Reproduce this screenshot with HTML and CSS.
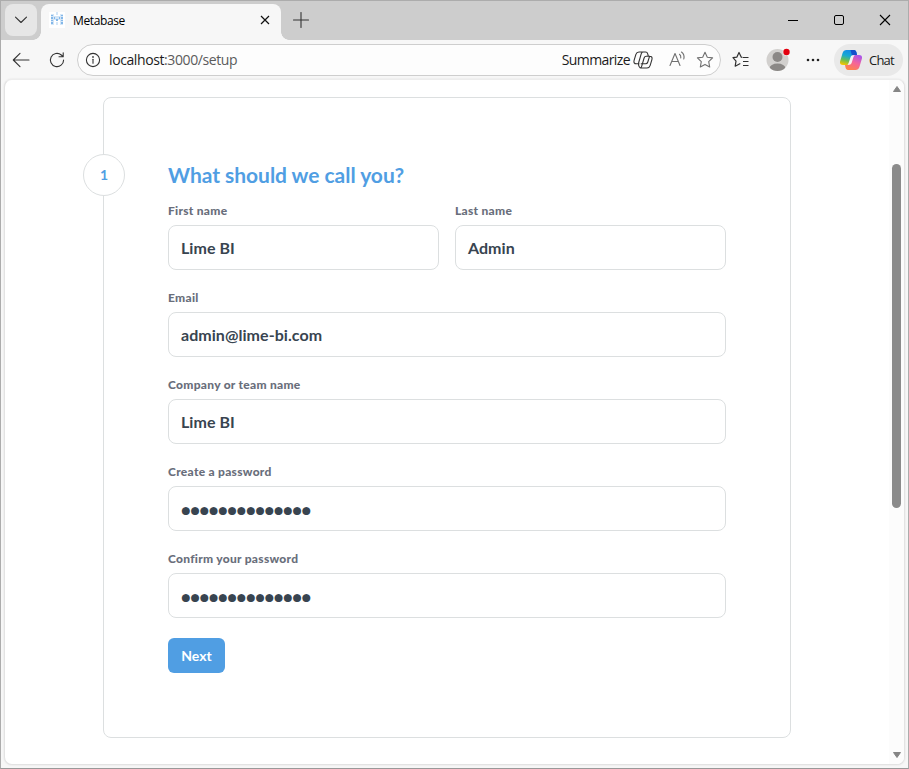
FILE: index.html
```html
<!DOCTYPE html>
<html lang="en">
<head>
<meta charset="utf-8">
<title>Metabase</title>
<link rel="stylesheet" href="styles.css">
</head>
<body>
<div class="window">
  <header class="tabstrip">
    <div class="tab-actions"><svg width="14" height="8" viewBox="0 0 14 8"><path d="M1.500 1.200 7 6.500l5.500-5.300" class="line"/></svg></div>
    <div class="tab">
      <svg class="favicon" width="16" height="16" viewBox="0 0 16 16"><rect width="16" height="16" fill="#fff"/>
        <g fill="#d4e6f7"><rect x="2" y="2" width="3" height="11"/><rect x="11" y="2" width="3" height="11"/><rect x="7" y="0" width="2" height="3"/><rect x="7" y="10" width="2" height="3"/><rect x="5" y="4" width="6" height="4"/></g>
        <g fill="#84b8e9"><rect x="2" y="3" width="2" height="1"/><rect x="2" y="5" width="2" height="2"/><rect x="2" y="8" width="2" height="1"/><rect x="2" y="10" width="2" height="2"/><rect x="12" y="3" width="2" height="1"/><rect x="12" y="5" width="2" height="2"/><rect x="12" y="8" width="2" height="1"/><rect x="12" y="10" width="2" height="2"/><rect x="5" y="5" width="1" height="2"/><rect x="10" y="5" width="1" height="2"/><rect x="7" y="7" width="2" height="2"/></g></svg>
      <span class="tab-title">Metabase</span>
      <svg class="tab-close" width="10" height="10" viewBox="0 0 10 10"><path d="m1 1 8 8M9 1 1 9" stroke="#111" stroke-width="1.200"/></svg>
    </div>
    <svg class="new-tab" width="16" height="16" viewBox="0 0 16 16"><path d="M8 .5v15M.5 8h15" class="line"/></svg>
    <div class="controls">
      <svg width="10" height="12" viewBox="0 0 10 12"><path d="M0 6.500h10" stroke="#000"/></svg>
      <svg width="10" height="12" viewBox="0 0 10 12"><rect x=".5" y="1.500" width="9" height="9" rx="1.500" fill="none" stroke="#000"/></svg>
      <svg width="12" height="12" viewBox="0 0 12 12"><path d="m1 1 10 10M11 1 1 11" stroke="#000" stroke-width="1.100"/></svg>
    </div>
  </header>
  <nav class="toolbar">
    <svg class="back" width="18" height="16" viewBox="0 0 18 16"><path d="M17 8H1.500M8 1.300 1.300 8 8 14.700" class="line"/></svg>
    <svg class="reload" width="16" height="16" viewBox="0 0 16 16"><path d="M14.600 8A6.600 6.600 0 1 1 12.300 3L14 4.500M14.200.8v4H10" class="line"/></svg>
    <div class="address">
      <svg class="info" width="16" height="16" viewBox="0 0 16 16"><circle cx="8" cy="8" r="6.600" class="line"/><path d="M8 7.200v4" class="line"/><circle cx="8" cy="5" r=".9" fill="#444"/></svg>
      <span class="url">localhost<span class="url-dim">:3000/setup</span></span>
      <span class="summarize">Summarize</span>
      <svg class="summary-icon" width="20" height="18" viewBox="0 0 20 18"><path d="M6 12.800H3.300C1.300 12.800.5 11.500 1.100 9.400L2.900 3.400C3.400 1.800 4.300 1 6 1h6.500c1.300 0 1.900.6 2.200 1.800l.6 2.200M10.300 1C9.200 1 8.600 1.600 8.200 2.800L5.700 11.500c-.4 1.300-.3 2 .1 3.400.4 1.400 1 2.100 2.300 2.100H14c1.700 0 2.600-.8 3.100-2.400l1.800-6c.6-2.100-.2-3.400-2.200-3.400H13.200c-1.100 0-1.700.6-2.100 1.800L8.800 14.800C8.400 16.300 8 17 7.200 16.800M8.200 12.800h4.500c1.100 0 1.700-.6 2.100-1.800l1.800-5.800" class="line"/></svg>
      <svg class="read" width="17" height="17" viewBox="0 0 17 17"><path d="m1 14.500 5-12 5 12M2.700 10.500h6.600M10.500 3.300c1 .8 1.500 2 1.300 3.700M12.500 1c2.100 1.500 3 4 2.300 7" class="line soft"/></svg>
      <svg class="star" width="18" height="18" viewBox="0 0 18 18"><path d="m9 1.300 2.300 4.900 5.300.7-3.900 3.700 1 5.400L9 13.400 4.300 16l1-5.400L1.400 6.900l5.300-.7z" class="line soft"/></svg>
    </div>
    <svg class="favorites" width="18" height="18" viewBox="0 0 18 18"><path d="M11 6.500h5.500M11 10.500h5.500M11 14.500h5.500M10.500 6.500 9.300 6.200 7 1.500 4.800 6.200 1 6.700l3 3.500-.8 5L8.300 12.500" stroke="#303030" fill="none" stroke-width="1.200" stroke-linejoin="round"/></svg>
    <svg class="avatar" width="25" height="25" viewBox="0 0 25 25"><defs><clipPath id="face"><circle cx="11.500" cy="13" r="11"/></clipPath></defs><circle cx="11.500" cy="13" r="11" fill="#d2d0ce"/><g clip-path="url(#face)" fill="#8b8886"><circle cx="11.500" cy="10" r="5"/><ellipse cx="11.500" cy="21.500" rx="8" ry="5"/></g><circle cx="20.500" cy="5" r="3.800" fill="#f7f7f7"/><circle cx="20.500" cy="5" r="3.200" fill="#e3000f"/></svg>
    <svg class="more" width="14" height="4" viewBox="0 0 14 4"><g fill="#222"><circle cx="2" cy="2" r="1.300"/><circle cx="7" cy="2" r="1.300"/><circle cx="12" cy="2" r="1.300"/></g></svg>
    <div class="chat">
      <svg width="22" height="20" viewBox="0 0 22 20"><defs>
        <linearGradient id="cool" x1=".6" y1="0" x2=".3" y2="1"><stop stop-color="#1689e8"/><stop offset=".4" stop-color="#18a9d2"/><stop offset=".7" stop-color="#69be54"/><stop offset="1" stop-color="#f4c500"/></linearGradient>
        <linearGradient id="warm" x1=".8" y1="0" x2=".3" y2="1"><stop stop-color="#a855ed"/><stop offset=".5" stop-color="#f5649a"/><stop offset="1" stop-color="#ff8448"/></linearGradient></defs>
        <path d="M6.500 0H14c1.500 0 2 1 2.500 2.500L17 5h-3c-1.400 0-2.200.8-2.700 2.300L9.500 13c-.5 1.500-1.300 2-2.500 2H3C.5 15-.5 13.500.2 11L2.600 3C3.200 1 4.500 0 6.500 0z" fill="url(#cool)"/>
        <path d="M10.500 0H14c1.500 0 2 1 2.500 2.500L17 5h-3c-.8 0-1.500.3-2 .8z" fill="#1550cb"/>
        <path d="M15.500 20H8c-1.500 0-2-1-2.500-2.500L5 15h2.500c1.400 0 2.200-.8 2.700-2.300L12 7c.5-1.500 1.300-2 2.500-2H19c2.500 0 3.500 1.500 2.800 4l-2.400 8c-.6 2-1.900 3-3.900 3z" fill="url(#warm)"/>
        <path d="M12.800 5.200H15c-.8.300-1.200.9-1.500 1.800l-1.800 5.800c-.4 1.300-1.200 2-2.700 2H7.200c.7-.3 1.200-1 1.600-2.200l1.700-5.400c.4-1.300 1.100-2 2.300-2z" fill="#f5f3f3"/></svg>
      <span>Chat</span>
    </div>
  </nav>
  <main class="page">
    <div class="content">
      <section class="card">
        <div class="step">1</div>
        <h1>What should we call you?</h1>
        <form class="form">
          <div class="row">
            <div class="field"><label>First name</label><div class="input">Lime BI</div></div>
            <div class="field"><label>Last name</label><div class="input">Admin</div></div>
          </div>
          <div class="field"><label>Email</label><div class="input">admin@lime-bi.com</div></div>
          <div class="field"><label>Company or team name</label><div class="input">Lime BI</div></div>
          <div class="field"><label>Create a password</label><div class="input secret">●●●●●●●●●●●●●●</div></div>
          <div class="field"><label>Confirm your password</label><div class="input secret">●●●●●●●●●●●●●●</div></div>
          <button type="button">Next</button>
        </form>
      </section>
    </div>
    <div class="scrollbar">
      <svg width="10" height="8" viewBox="0 0 10 8"><path d="M5 1.500 8.500 6.500h-7z" class="arrow"/></svg>
      <div class="thumb"></div>
      <svg width="10" height="8" viewBox="0 0 10 8"><path d="M5 6.500 1.500 1.500h7z" class="arrow"/></svg>
    </div>
  </main>
</div>
</body>
</html>
```
FILE: styles.css
```css
* { box-sizing: border-box; }
html, body { margin: 0; height: 100%; overflow: hidden; }
body { font-family: "Open Sans", "Noto Sans", sans-serif; color: #1b1b1b; }
svg { display: block; flex: none; }
.line { fill: none; stroke: #333; stroke-width: 1.1; stroke-linecap: round; stroke-linejoin: round; }
.soft { stroke: #707070; }

.window { height: 769px; display: flex; flex-direction: column; background: #f7f7f7; border: 1px solid #acacac; border-bottom-color: #999; }

.tabstrip { height: 39px; flex: none; display: flex; background: #cdcdcd; }
.tab-actions { width: 32px; height: 32px; margin: 3px 4px 0; border-radius: 8px; background: #e6e6e6; display: flex; align-items: center; justify-content: center; }
.tab { position: relative; width: 240px; height: 36px; margin-top: 3px; border-radius: 8px 8px 0 0; background: #f7f7f7; display: flex; align-items: center; padding: 0 11px 4px 8px; }
.tab::before, .tab::after { content: ""; position: absolute; bottom: 0; width: 8px; height: 8px; }
.tab::before { left: -8px; background: radial-gradient(circle at 0 0, transparent 7.5px, #f7f7f7 8px); }
.tab::after { right: -8px; background: radial-gradient(circle at 100% 0, transparent 7.5px, #f7f7f7 8px); }
.tab-title { margin-left: 8px; padding-top: 1px; font-size: 12px; letter-spacing: -0.37px; color: #000; }
.tab-close { margin-left: auto; }
.new-tab { margin: 11px 0 0 12px; }
.controls { margin-left: auto; margin-top: 13px; margin-right: 17px; display: flex; gap: 35px; }
.controls svg:first-child { margin-right: 1px; }

.toolbar { height: 39px; flex: none; display: flex; align-items: center; }
.back { margin-left: 11px; }
.reload { margin-left: 19px; }
.address { width: 644px; height: 32px; margin-left: 12px; padding: 0 6px 0 7px; border: 1px solid #cecece; border-radius: 16px; background: #fdfdfd; display: flex; align-items: center; font-size: 14px; }
.url { margin-left: 8px; letter-spacing: -0.4px; }
.url-dim { color: #5b5b5b; }
.summarize { margin-left: auto; letter-spacing: -0.6px; }
.summary-icon { margin-left: 3px; }
.read { margin-left: 16px; }
.star { margin-left: 10px; }
.favorites { margin-left: 11px; }
.avatar { margin-left: 16px; margin-top: -1px; }
.more { margin-left: 15px; }
.chat { width: 69px; height: 32px; margin-left: 14px; padding-left: 6px; border-radius: 16px; background: #e9e9e9; display: flex; align-items: center; gap: 7px; font-size: 13px; letter-spacing: -0.8px; }

.page { height: 686px; flex: none; margin: 0 3px 0 3px; background: #fff; border: 1px solid #e3e3e3; border-top-color: #ededed; border-radius: 8px; box-shadow: 0 0 2px #ddd; display: flex; overflow: hidden; }
.content { flex: 1; padding: 17px 0 0 98px; font-family: Lato, sans-serif; }
.card { position: relative; width: 688px; height: 641px; border: 1px solid #dcdfe0; border-radius: 8px; padding: 63px 64px 64px; }
.step { position: absolute; left: -21px; top: 56px; width: 42px; height: 42px; border: 1px solid #dcdfe0; border-radius: 50%; background: #fff; display: flex; align-items: center; justify-content: center; padding-bottom: 2px; font-size: 14px; font-weight: 700; color: #509ee3; }
h1 { margin: 0; font-size: 21px; line-height: 28px; font-weight: 700; letter-spacing: -0.03px; color: #509ee3; }
.form { margin-top: 14px; display: flex; flex-direction: column; gap: 20px; align-items: stretch; }
.row { display: flex; gap: 16px; }
.field { flex: 1; display: flex; flex-direction: column; }
label { font-size: 12px; line-height: 16px; height: 22px; font-weight: 900; letter-spacing: 0.28px; color: #696e7b; }
.input { height: 45px; border: 1px solid #dcdfe0; border-radius: 8px; padding: 0 12px; display: flex; align-items: center; font-size: 16px; letter-spacing: 0.05px; font-weight: 700; color: #384450; background: #fff; }
.secret { padding-top: 1px; letter-spacing: -0.33px; }
button { width: 57px; height: 35px; border: 0; border-radius: 6px; background: #509ee3; color: #fff; font: 700 14px Lato, sans-serif; padding: 0; }

.scrollbar { width: 15px; padding: 5px 0 5px; background: #fcfcfc; display: flex; flex-direction: column; align-items: center; }
.arrow { fill: #858585; stroke: #858585; stroke-linejoin: round; }
.thumb { width: 9px; height: 344px; margin: 71px 0 auto; border-radius: 5px; background: #8b8b8b; }
```
